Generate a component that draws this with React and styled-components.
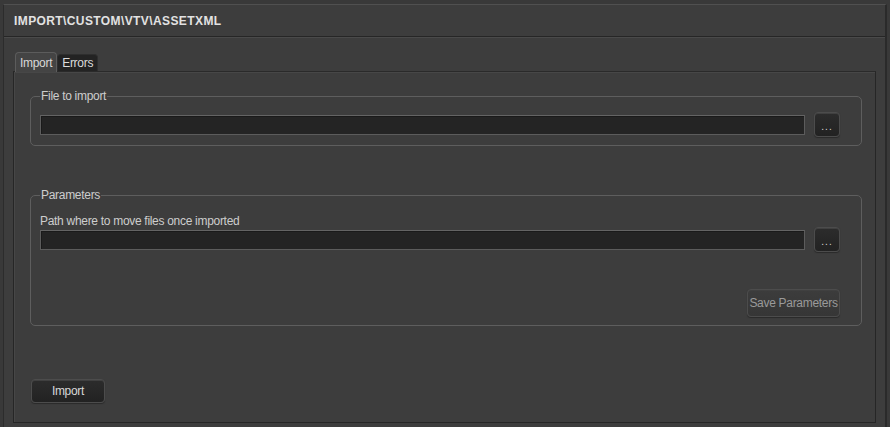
import React from "react";
import styled, { createGlobalStyle } from "styled-components";

const Global = createGlobalStyle`
  html, body { margin: 0; padding: 0; background: #393939; }
  body { font-family: "Liberation Sans", Arial, sans-serif; font-size: 12px; color: #cfcfcf; }
  #root { padding: 4px 3px 0 3px; }
`;

const Window = styled.div`
  background: #3d3d3d;
  border-top: 1px solid #505050;
  border-left: 1px solid #2c2c2c;
  border-right: 2px solid #2a2a2a;
  height: 440px;
  box-sizing: border-box;
`;

const Header = styled.div`
  height: 31px;
  display: flex;
  align-items: center;
  padding-left: 10px;
  border-bottom: 1px solid #262626;
  box-shadow: 0 1px 0 #4a4a4a;
  font-family: "Liberation Sans", Arial, sans-serif;
  font-weight: bold;
  font-size: 12px;
  letter-spacing: 0.4px;
  color: #e2e2e2;
`;

const Body = styled.div`
  padding: 15px 9px 0 9px;
`;

const TabBar = styled.div`
  display: flex;
  align-items: flex-end;
  height: 19px;
  padding-left: 2px;
`;

const Tab = styled.div`
  box-sizing: border-box;
  height: ${(p) => (p.$active ? "20px" : "17px")};
  padding: 0 ${(p) => (p.$active ? "4px" : "4px")};
  display: flex;
  align-items: center;
  font-size: 12px;
  letter-spacing: -0.3px;
  color: ${(p) => (p.$active ? "#d8d8d8" : "#dcdcdc")};
  background: ${(p) => (p.$active ? "#444444" : "#232323")};
  border: 1px solid ${(p) => (p.$active ? "#5c5c5c" : "#2e2e2e")};
  border-bottom: none;
  border-radius: 4px 4px 0 0;
  margin-bottom: ${(p) => (p.$active ? "-1px" : "0")};
  position: relative;
  z-index: ${(p) => (p.$active ? 1 : 0)};
`;

const Panel = styled.div`
  box-sizing: border-box;
  height: 352px;
  border: 1px solid #262626;
  border-top-color: #2a2a2a;
  box-shadow: inset 1px 1px 0 #474747;
  padding: 17px 13px 0 16px;
  display: flex;
  flex-direction: column;
`;

const Group = styled.fieldset`
  margin: ${(p) => p.$mt || 0}px 0 0 0;
  padding: ${(p) => p.$pt}px 21px ${(p) => p.$pb}px 9px;
  border: 1px solid #5e5e5e;
  border-radius: 5px;
  min-width: 0;
`;

const Legend = styled.legend`
  margin-left: 0;
  padding: 0 1px;
  font-size: 12px;
  line-height: 14px;
  color: #cdcdcd;
  letter-spacing: -0.3px;
`;

const FieldLabel = styled.div`
  font-size: 12px;
  line-height: 13px;
  margin-bottom: -1px;
  color: #cdcdcd;
  letter-spacing: -0.3px;
`;

const Row = styled.div`
  display: flex;
  align-items: center;
  gap: 9px;
  height: 25px;
`;

const PathInput = styled.div`
  flex: 1;
  height: 20px;
  box-sizing: border-box;
  background: #242424;
  border: 1px solid #5c5c5c;
  border-top-color: #646464;
  box-shadow: inset 1px 1px 0 #1a1a1a;
`;

const Button = styled.button`
  box-sizing: border-box;
  width: ${(p) => p.$w}px;
  height: ${(p) => p.$h}px;
  padding: 0;
  font-family: "Liberation Sans", Arial, sans-serif;
  font-size: 12px;
  letter-spacing: -0.3px;
  color: ${(p) => (p.$dim ? "#9a9a9a" : "#d8d8d8")};
  background: ${(p) => (p.$dim ? "linear-gradient(#3c3c3c, #363636)" : "linear-gradient(#2c2c2c, #222222)")};
  border: 1px solid #4c4c4c;
  border-radius: 4px;
  box-shadow: 0 1px 1px #2a2a2a, inset 0 1px 0 #404040;
  line-height: 1;
`;

const Dots = styled.span`
  font-size: 10px;
  letter-spacing: 1px;
  position: relative;
  top: 1px;
`;

const SaveRow = styled.div`
  display: flex;
  justify-content: flex-end;
  margin-top: 37px;
`;

const Footer = styled.div`
  margin-top: auto;
  margin-bottom: 19px;
  padding-left: 1px;
`;

export default function App() {
  return (
    <>
      <Global />
      <Window>
        <Header>IMPORT\CUSTOM\VTV\ASSETXML</Header>
        <Body>
          <TabBar>
            <Tab $active>Import</Tab>
            <Tab>Errors</Tab>
          </TabBar>
          <Panel>
            <Group $pt={9} $pb={8}>
              <Legend>File to import</Legend>
              <Row>
                <PathInput />
                <Button $w={26} $h={25}><Dots>...</Dots></Button>
              </Row>
            </Group>
            <Group $mt={42} $pt={13} $pb={8}>
              <Legend>Parameters</Legend>
              <FieldLabel>Path where to move files once imported</FieldLabel>
              <Row>
                <PathInput />
                <Button $w={26} $h={25}><Dots>...</Dots></Button>
              </Row>
              <SaveRow>
                <Button $w={93} $h={28} $dim>Save Parameters</Button>
              </SaveRow>
            </Group>
            <Footer>
              <Button $w={74} $h={24}>Import</Button>
            </Footer>
          </Panel>
        </Body>
      </Window>
    </>
  );
}
